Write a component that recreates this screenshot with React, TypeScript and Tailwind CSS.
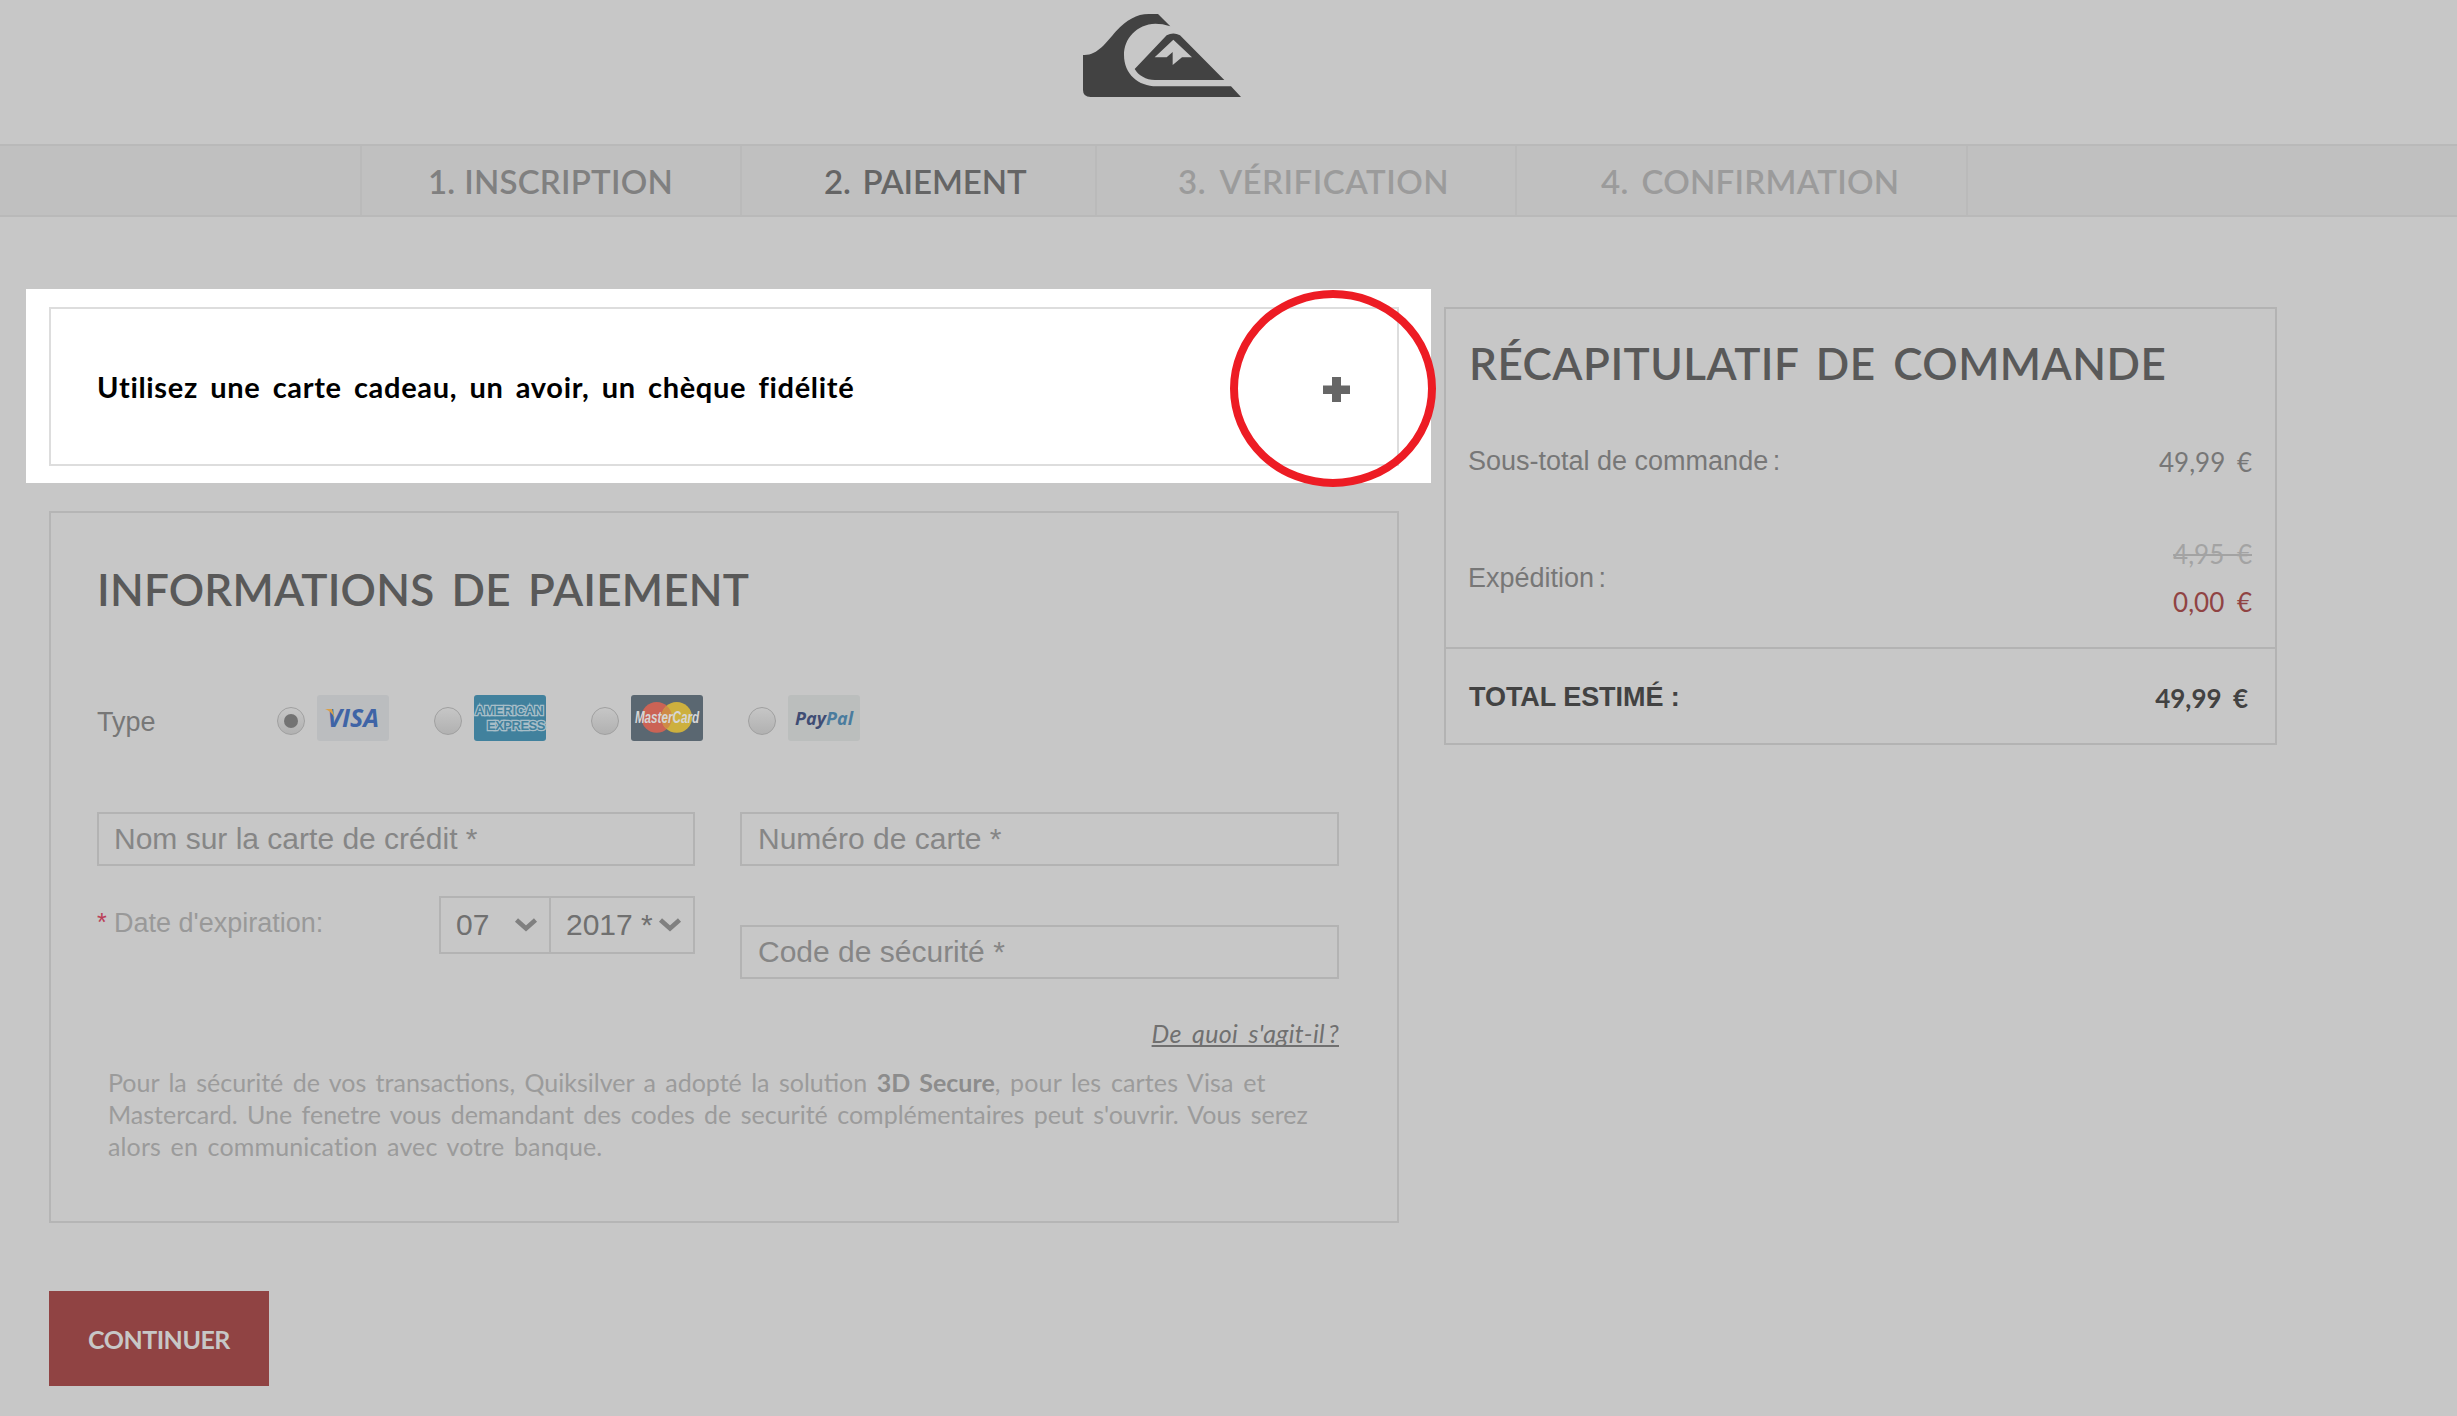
import type { ReactNode } from "react";
import { clsx } from "clsx";

interface Step {
  label: string;
  className: string;
}

const steps: Step[] = [
  {
    label: "1. INSCRIPTION",
    className:
      "w-[380px] pl-[66px] text-[#808080] tracking-[0.2px] [word-spacing:0.5px]",
  },
  {
    label: "2. PAIEMENT",
    className:
      "w-[355px] pl-[82px] text-[#656565] tracking-[-0.05px] [word-spacing:3.5px]",
  },
  {
    label: "3. VÉRIFICATION",
    className:
      "w-[420px] pl-[81px] text-[#9b9b9b] tracking-[0.5px] [word-spacing:6px]",
  },
  {
    label: "4. CONFIRMATION",
    className:
      "w-[453px] pl-[84px] border-r-2 text-[#9b9b9b] tracking-[0.27px] [word-spacing:4.5px]",
  },
];

function Logo() {
  return (
    <svg
      viewBox="69 42 474 249"
      preserveAspectRatio="none"
      className="w-[158px] h-[83px] fill-[#424242]"
    >
      <path d="M69 165C112 168 138 128 168 94C200 60 230 42 266 42H294L331 79C315 73 300 71 286 71C230 73 192 115 192 165C192 222 235 259 290 259H513L543 291H92Q69 291 69 270Z" />
      <path
        fillRule="evenodd"
        d="M224 207L320 106Q340 95 360 106L493 240H285C258 240 235 226 224 207ZM340 119L284 172H320L338 156V195L366 172H396Z"
      />
    </svg>
  );
}

function Chevron() {
  return (
    <svg viewBox="0 0 24 15" className="w-6 h-[15px]" fill="none">
      <path d="M2.5 3L12 11.5L21.5 3" stroke="#808080" strokeWidth="4.6" />
    </svg>
  );
}

function Field({ label, className }: { label: string; className?: string }) {
  return (
    <div
      className={clsx(
        "h-[54px] border-2 border-[#b3b3b3] flex items-center pb-0.5 text-[30px] text-[#868686] whitespace-nowrap",
        className,
      )}
    >
      {label}
    </div>
  );
}

function CardOption({
  checked,
  className,
  children,
}: {
  checked?: boolean;
  className: string;
  children: ReactNode;
}) {
  return (
    <div className="flex items-center w-[157px] h-[46px]">
      <span className="mt-1.5 size-7 rounded-full border border-[#a0a0a0] bg-gradient-to-b from-[#c6c6c6] to-[#b1b1b1] flex items-center justify-center">
        {checked && <span className="size-3.5 rounded-full bg-[#737373]" />}
      </span>
      <span
        className={clsx(
          "relative ml-3 w-[72px] h-[46px] rounded-[3px] flex items-center justify-center",
          className,
        )}
      >
        {children}
      </span>
    </div>
  );
}

function PaymentInfo() {
  return (
    <section className="mt-7 ml-[23px] w-[1350px] h-[712px] border-2 border-[#b5b5b5] pl-[46px] pt-[54px]">
      <h2 className="font-['Lato'] font-semibold text-[44px] leading-[44px] tracking-[0.22px] [word-spacing:6px] text-[#595959] whitespace-nowrap">
        INFORMATIONS DE PAIEMENT
      </h2>

      {/* Card type */}
      <div className="mt-[84px] h-[46px] flex items-center">
        <span className="w-[180px] mt-[9px] text-[27px] text-[#777777]">
          Type
        </span>
        <CardOption checked className="bg-[#bbbdbf]">
          <span className="font-['Open_Sans'] font-bold italic text-[25px] text-[#3f64a6]">
            VISA
          </span>
          <svg className="absolute left-[8px] top-[13px] w-3 h-3">
            <path d="M0 1H7L10 11C8 6 5 3 0 1Z" fill="#d9a04a" />
          </svg>
        </CardOption>
        <CardOption className="bg-[#41819d]">
          <span className="w-[72px] text-[13px] leading-[15px] font-bold text-[#41819d] whitespace-nowrap [-webkit-text-stroke:2.5px_#a8bec8] [paint-order:stroke_fill]">
            <span className="block pl-px tracking-[-0.2px]">AMERICAN</span>
            <span className="block pl-[13px] tracking-[-0.5px]">EXPRESS</span>
          </span>
        </CardOption>
        <CardOption className="bg-[#5a6771]">
          <svg viewBox="0 0 72 46" className="absolute inset-0">
            <circle cx="25.7" cy="22.4" r="15.4" fill="#cb6355" />
            <circle cx="45.7" cy="22.4" r="15.4" fill="#cdb03e" />
            <path d="M35.7 10.7a15.4 15.4 0 0 1 0 23.4a15.4 15.4 0 0 1 0-23.4" fill="#cf8b46" />
          </svg>
          <span className="relative font-bold italic text-[16px] scale-x-73 text-[#d6d6d6]">
            MasterCard
          </span>
        </CardOption>
        <CardOption className="bg-[#bbbebd]">
          <span className="font-['Open_Sans'] font-bold italic text-[18px] text-[#3f4d74]">
            Pay<span className="text-[#4a7c9e]">Pal</span>
          </span>
        </CardOption>
      </div>

      {/* Card details */}
      <div className="mt-[71px] flex gap-[45px]">
        <div className="w-[598px]">
          <Field label="Nom sur la carte de crédit *" className="pl-[15px]" />
          <div className="mt-[30px] flex justify-between">
            <p className="pt-3 flex text-[27px] leading-[30px] text-[#999999] whitespace-nowrap">
              <span className="w-[17px] -mt-px text-[25px] text-[#bb3f58]">
                *
              </span>
              Date d'expiration:
            </p>
            <div className="flex w-[256px] h-[58px] border-2 border-[#b3b3b3] text-[30px] text-[#707070] whitespace-nowrap">
              <div className="w-[110px] border-r-2 border-[#b3b3b3] flex items-center justify-between pb-0.5 pl-[15px] pr-[11px]">
                07
                <Chevron />
              </div>
              <div className="flex-1 flex items-center justify-between pb-0.5 pl-[15px] pr-[11px]">
                2017 *
                <Chevron />
              </div>
            </div>
          </div>
        </div>
        <div className="w-[599px]">
          <Field label="Numéro de carte *" className="pl-4" />
          <Field label="Code de sécurité *" className="mt-[59px] pl-4" />
          <p className="mt-[39px] text-right font-['Lato'] italic text-[25px] leading-[30px] tracking-[0.35px] [word-spacing:4px] text-[#707070] underline decoration-2 underline-offset-2 [text-decoration-skip-ink:none]">
            De quoi s'agit-il
            <span className="[word-spacing:-3px]"> ?</span>
          </p>
        </div>
      </div>

      <p className="mt-[18px] ml-[11px] font-['Lato'] text-[25px] leading-8 [word-spacing:3px] text-[#9b9b9b] whitespace-nowrap">
        <span className="block">
          Pour la sécurité de vos transactions, Quiksilver a adopté la solution{" "}
          <b className="text-[#8c8c8c]">3D Secure</b>
          <span className="tracking-[0.15px]">, pour les cartes Visa et</span>
        </span>
        <span className="block">
          Mastercard. Une fenetre vous demandant des codes de securité
          complémentaires peut s'ouvrir. Vous serez
        </span>
        <span className="block tracking-[0.14px]">
          alors en communication avec votre banque.
        </span>
      </p>
    </section>
  );
}

function OrderSummary() {
  return (
    <aside className="ml-[13px] mt-[18px] w-[833px] h-[438px] border-2 border-[#b3b3b3] flex flex-col text-[27px] leading-[30px] text-[#777777] whitespace-nowrap">
      <h2 className="mt-8 pl-[23px] font-['Lato'] font-semibold text-[44px] leading-[44px] tracking-[0.5px] [word-spacing:6px] text-[#595959]">
        RÉCAPITULATIF DE COMMANDE
      </h2>
      <div className="mt-[61px] px-[22px] flex justify-between">
        <span>
          Sous-total de commande<span className="[word-spacing:-3px]"> :</span>
        </span>
        <span className="pr-px pt-px font-['Lato'] text-[26px] [word-spacing:5px]">
          49,99 €
        </span>
      </div>
      <div className="mt-[62px] mb-[30px] px-[22px] flex justify-between items-center">
        <span>
          Expédition<span className="[word-spacing:-3px]"> :</span>
        </span>
        <div className="pr-px flex flex-col gap-[18px] text-right font-['Lato'] text-[26px] [word-spacing:6px]">
          <span className="text-[#a3a3a3] line-through decoration-2">
            4,95 €
          </span>
          <span className="text-[#904343]">0,00 €</span>
        </div>
      </div>
      <div className="flex-1 border-t-2 border-[#b3b3b3] pl-[23px] pr-[27px] flex justify-between items-center font-bold text-[#424242]">
        <span className="pt-0.5 tracking-[-0.05px]">TOTAL ESTIMÉ :</span>
        <span className="pt-1 font-['Lato'] text-[26px] [word-spacing:5px]">
          49,99 €
        </span>
      </div>
    </aside>
  );
}

export default function App() {
  return (
    <div className="relative w-[2457px] h-[1416px] overflow-hidden bg-[#c7c7c7] font-['Liberation_Sans',sans-serif]">
      <header className="h-36 pt-3.5 pl-[1083px]">
        <Logo />
      </header>

      {/* Checkout steps */}
      <nav className="h-[73px] pl-[360px] flex bg-[#c0c0c0] border-y-2 border-[#b9b9b9]">
        {steps.map((step) => (
          <div
            key={step.label}
            className={clsx(
              "flex items-center pt-0.5 border-l-2 border-[#bababa] font-['Lato'] font-semibold text-[33px] whitespace-nowrap",
              step.className,
            )}
          >
            {step.label}
          </div>
        ))}
      </nav>

      <main className="flex items-start pt-[72px] pl-[26px]">
        <div className="w-[1405px]">
          {/* Gift card panel, left bright above the dimmed page */}
          <div className="h-[194px] bg-white pt-[18px] pl-[23px]">
            <div className="w-[1350px] h-[159px] border-2 border-[#dddddd] pl-[46px] pr-[47px] flex items-center justify-between">
              <h3 className="font-['Lato'] font-bold text-[29px] tracking-[0.68px] [word-spacing:4.5px] text-black whitespace-nowrap">
                Utilisez une carte cadeau, un avoir, un chèque fidélité
              </h3>
              <svg viewBox="0 0 27 25" className="mt-1.5 w-[27px] h-[25px]">
                <path d="M9 0h9v8.5h9v8.5h-9v8h-9v-8h-9v-8.5h9Z" fill="#666666" />
              </svg>
            </div>
          </div>

          <PaymentInfo />

          <button className="mt-[68px] ml-[23px] w-[220px] h-[95px] pt-0.5 bg-[#904343] font-['Lato'] font-bold text-[25px] tracking-[-0.5px] text-[#c7c7c7]">
            CONTINUER
          </button>
        </div>

        <OrderSummary />
      </main>

      <svg
        viewBox="0 0 206 197"
        className="absolute left-[1230px] top-[290px] w-[206px] h-[197px]"
        fill="none"
      >
        <ellipse cx="103" cy="98.5" rx="99" ry="94.5" stroke="#ed1c24" strokeWidth="8" />
      </svg>
    </div>
  );
}
